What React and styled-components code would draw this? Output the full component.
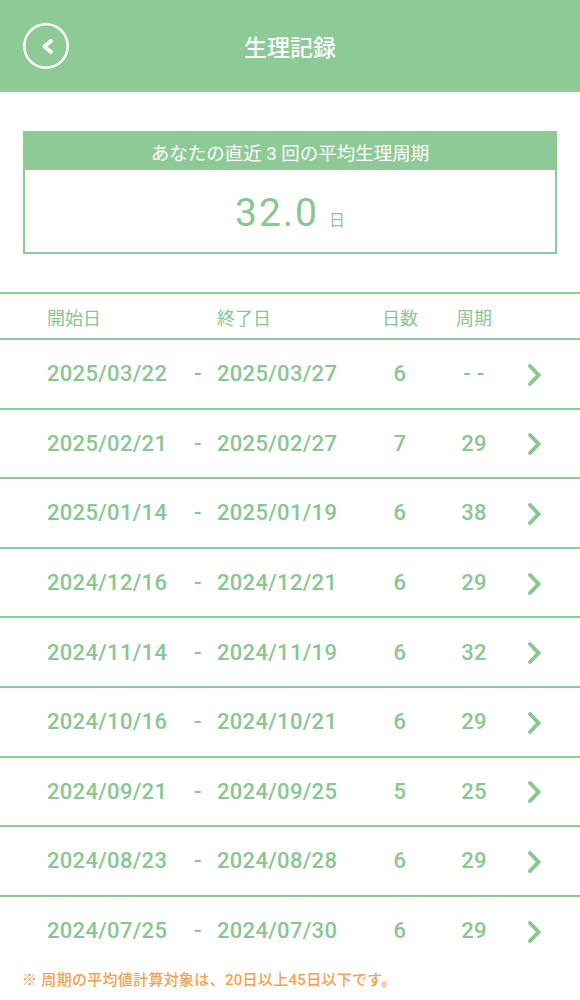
import React from 'react'
import styled, { createGlobalStyle } from 'styled-components'

const COLOR_GREEN = '#8ECA96'
const COLOR_TEXT = '#88C791'
const COLOR_ORANGE = '#F5A04B'
const FONT = 'Roboto, "Noto Sans CJK JP", sans-serif'

const GlobalStyle = createGlobalStyle`
  html, body { margin: 0; padding: 0; background: #fff; }
  body { font-family: ${FONT}; width: 580px; }
  * { box-sizing: border-box; }
`

const Page = styled.div`
  width: 580px;
  min-height: 1000px;
  background: #fff;
`

const Header = styled.header`
  display: grid;
  grid-template-columns: 1fr auto 1fr;
  align-items: center;
  height: 92px;
  padding: 0 23px;
  background: ${COLOR_GREEN};
`

const BackButton = styled.button`
  display: flex;
  justify-self: start;
  padding: 0;
  border: none;
  background: transparent;
  width: 46px;
  height: 46px;
`

const Title = styled.h1`
  margin: 0;
  font-size: 23px;
  font-weight: 500;
  color: #fff;
`

const Summary = styled.section`
  margin: 39px 23px 0;
  border: 2px solid ${COLOR_GREEN};
`

const SummaryHead = styled.div`
  display: flex;
  align-items: center;
  justify-content: center;
  height: 37px;
  background: ${COLOR_GREEN};
  color: #fff;
  font-size: 18.5px;
  font-weight: 400;
`

const SummaryBody = styled.div`
  display: flex;
  align-items: baseline;
  justify-content: center;
  height: 82px;
  padding-top: 20px;
  color: ${COLOR_TEXT};
`

const AverageValue = styled.span`
  font-size: 39px;
  font-weight: 400;
  letter-spacing: 2px;
`

const AverageUnit = styled.span`
  margin-left: 10px;
  font-size: 16px;
`

const Table = styled.div`
  margin-top: 38px;
`

const Row = styled.div`
  display: grid;
  grid-template-columns: 140px 30px 150px 66px 82px 1fr;
  align-items: center;
  height: ${p => (p.$head ? '46px' : '69.6px')};
  padding-left: 47px;
  padding-top: ${p => (p.$head ? '2px' : '0')};
  border-top: 2px solid ${COLOR_GREEN};
  color: ${COLOR_TEXT};
  font-size: ${p => (p.$head ? '18px' : '22px')};
  font-weight: ${p => (p.$head ? 400 : 500)};
  letter-spacing: ${p => (p.$head ? '0' : '0.3px')};
`

const Cell = styled.span`
  text-align: ${p => p.$align || 'left'};
  white-space: nowrap;
`

const Dash = styled.span`
  padding-left: 7px;
`

const Chevron = styled.span`
  display: flex;
  padding-left: 12px;
  padding-top: 2px;
`

const Note = styled.p`
  margin: 6px 0 0;
  padding: 0 22px;
  line-height: 20px;
  font-size: 15px;
  font-weight: 500;
  letter-spacing: 0.3px;
  color: ${COLOR_ORANGE};
`

const records = [
  ['2025/03/22', '2025/03/27', 6, '- -'],
  ['2025/02/21', '2025/02/27', 7, 29],
  ['2025/01/14', '2025/01/19', 6, 38],
  ['2024/12/16', '2024/12/21', 6, 29],
  ['2024/11/14', '2024/11/19', 6, 32],
  ['2024/10/16', '2024/10/21', 6, 29],
  ['2024/09/21', '2024/09/25', 5, 25],
  ['2024/08/23', '2024/08/28', 6, 29],
  ['2024/07/25', '2024/07/30', 6, 29]
]

const BackIcon = () => (
  <svg width="46" height="46" viewBox="0 0 46 46" fill="none">
    <circle cx="23" cy="23" r="21.7" stroke="#fff" strokeWidth="2.5" />
    <polyline points="28,18 21.5,23.5 28,29" stroke="#fff" strokeWidth="3.8" strokeLinecap="round" strokeLinejoin="round" />
  </svg>
)

const ArrowIcon = () => (
  <svg width="15" height="24" viewBox="0 0 15 24" fill="none">
    <polyline points="3,3 11.5,12 3,21" stroke={COLOR_TEXT} strokeWidth="4" strokeLinecap="round" strokeLinejoin="miter" />
  </svg>
)

export default function App () {
  return <Page>
    <GlobalStyle />
    <Header>
      <BackButton aria-label="戻る"><BackIcon /></BackButton>
      <Title>生理記録</Title>
      <span />
    </Header>

    <Summary>
      <SummaryHead>あなたの直近 3 回の平均生理周期</SummaryHead>
      <SummaryBody>
        <AverageValue>32.0</AverageValue>
        <AverageUnit>日</AverageUnit>
      </SummaryBody>
    </Summary>

    <Table>
      <Row $head>
        <Cell>開始日</Cell>
        <span />
        <Cell>終了日</Cell>
        <Cell $align="center">日数</Cell>
        <Cell $align="center">周期</Cell>
        <span />
      </Row>
      {records.map(([start, end, days, cycle]) => (
        <Row key={start}>
          <Cell>{start}</Cell>
          <Dash>-</Dash>
          <Cell>{end}</Cell>
          <Cell $align="center">{days}</Cell>
          <Cell $align="center">{cycle}</Cell>
          <Chevron><ArrowIcon /></Chevron>
        </Row>
      ))}
    </Table>

    <Note>※ 周期の平均値計算対象は、20日以上45日以下です。</Note>
  </Page>
}
